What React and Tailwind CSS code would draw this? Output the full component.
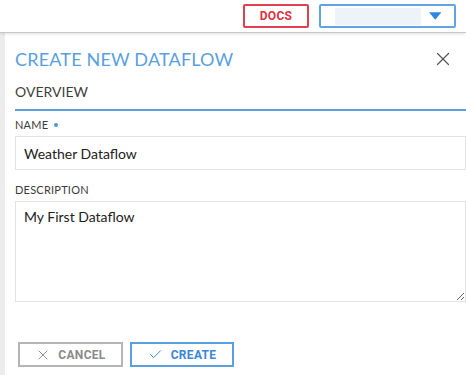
import { X, Check } from 'lucide-react';

// ─── Top bar ──────────────────────────────────────────────────────────────────
function TopBar() {
  return (
    <div className="h-[33px] bg-white border-b border-[#c8c8c8] shadow-[0_1px_3px_rgba(0,0,0,0.12)] flex items-center justify-end pr-[10px] gap-[10px] relative z-10">
      <button className="w-[66px] h-[24px] border-2 border-[#e0404f] rounded-[2px] text-[#e0303f] text-[12px] font-bold tracking-wide font-['Roboto',sans-serif] flex items-center justify-center">
        DOCS
      </button>
      <button className="w-[137px] h-[24px] border-2 border-[#62a3e4] rounded-[2px] flex items-center pl-[14px] pr-[13px] gap-[8px]">
        <span className="w-[89px] h-[17px] bg-[#eef3fa]" />
        <svg width="13" height="8" viewBox="0 0 13 8" className="ml-auto">
          <path d="M0 0 H13 L6.5 8 Z" fill="#2e86de" />
        </svg>
      </button>
    </div>
  );
}

// ─── Field label ──────────────────────────────────────────────────────────────
function Label({ children, required }) {
  return (
    <label className="flex items-center gap-[6px] text-[11px] text-[#3c3c3c] tracking-[0.02em] leading-none">
      {children}
      {required && <span className="w-[4px] h-[4px] rounded-full bg-[#4b96e0]" />}
    </label>
  );
}

export default function App() {
  return (
    <div className="w-[466px] h-[375px] overflow-hidden bg-white font-['Lato','Open_Sans',sans-serif]">
      <TopBar />
      <div className="flex h-[342px]">
        <div className="w-[5px] bg-[#ececec] shrink-0" />
        <div className="flex-1 pl-[10px] flex flex-col">
          {/* header */}
          <div className="flex items-center justify-between h-[50px] pt-[2px] pr-[12px]">
            <h1 className="text-[18px] text-[#5a9fe0] tracking-[0.01em]">CREATE NEW DATAFLOW</h1>
            <X size={22} strokeWidth={1.3} className="text-[#555]" />
          </div>

          {/* section tab */}
          <div className="h-[28px] border-b-2 border-[#5a9fe0] flex items-start">
            <span className="text-[14px] text-[#3f3f3f] leading-[16px] pt-[1px]">OVERVIEW</span>
          </div>

          {/* form */}
          <div className="flex flex-col pt-[8px]">
            <Label required>NAME</Label>
            <div className="mt-[6px] h-[34px] border border-[#e2e2e2] flex items-center px-[8px] text-[14px] text-[#222]">
              Weather Dataflow
            </div>
            <div className="mt-[14px]">
              <Label>DESCRIPTION</Label>
            </div>
            <textarea
              defaultValue="My First Dataflow"
              className="mt-[6px] h-[101px] border border-[#e2e2e2] px-[8px] pt-[4px] text-[14px] text-[#222] outline-none resize"
            />
          </div>

          {/* actions */}
          <div className="flex gap-[7px] mt-[40px] pl-[3px]">
            <button className="w-[105px] h-[25px] border-2 border-[#b5b5b5] flex items-center justify-center gap-[7px] text-[12px] font-bold text-[#8a8a8a] font-['Roboto',sans-serif] tracking-wide">
              <X size={16} strokeWidth={1.4} className="text-[#8a8a8a]" />
              CANCEL
            </button>
            <button className="w-[104px] h-[25px] border-2 border-[#5a9fe0] flex items-center justify-center gap-[8px] text-[12px] font-bold text-[#3a86d8] font-['Roboto',sans-serif] tracking-wide">
              <Check size={15} strokeWidth={1.6} className="text-[#3a86d8]" />
              CREATE
            </button>
          </div>
        </div>
      </div>
    </div>
  );
}
